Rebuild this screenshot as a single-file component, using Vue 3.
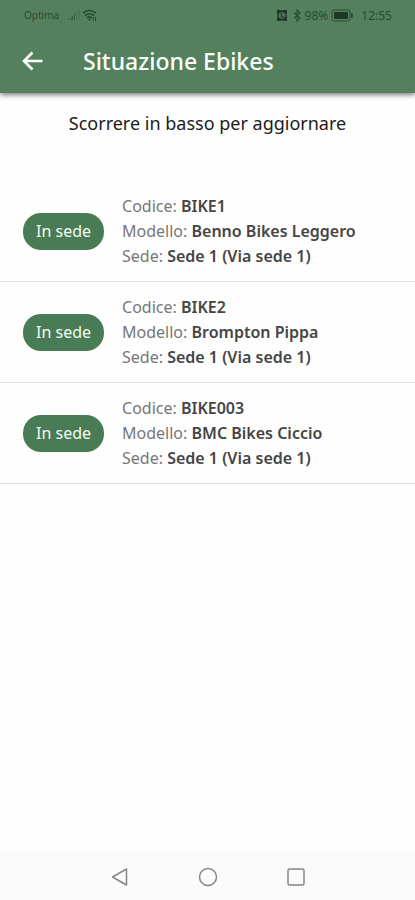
<script setup>
const bikes = [
  { code: 'BIKE1', model: 'Benno Bikes Leggero', site: 'Sede 1 (Via sede 1)', status: 'In sede' },
  { code: 'BIKE2', model: 'Brompton Pippa', site: 'Sede 1 (Via sede 1)', status: 'In sede' },
  { code: 'BIKE003', model: 'BMC Bikes Ciccio', site: 'Sede 1 (Via sede 1)', status: 'In sede' },
]
</script>

<template>
  <div class="screen">
    <header class="header">
      <div class="status">
        <div class="status-group left">
          <span class="carrier">Optima</span>
          <svg width="13" height="12" viewBox="0 0 13 12" aria-hidden="true">
            <path d="M1 11h1V9.500H1zM3 11h3V6.500zM7 11h1V5H7z" fill="#335b3e" />
            <path d="M9.500 11V3M12 11V1" stroke="#47724f" stroke-width="1" />
          </svg>
          <svg width="16" height="13" viewBox="0 0 16 13" fill="none" stroke="#294c34" stroke-width="1.700" aria-hidden="true">
            <path d="M1 4q6.500-5 13 0M3 6.500q4.500-3.500 9 0M5 9q2.500-2 5 0" />
            <path d="M6 10h3l-1.500 2z" fill="#294c34" stroke="none" />
            <path d="M11.500 8v4M13.500 8v4" stroke-width="1" />
          </svg>
        </div>
        <div class="status-group right">
          <svg width="12" height="13" viewBox="0 0 12 13" aria-hidden="true">
            <path d="M1 1h3l2 .500L8 1h3v3l-.500 2 .500 3v3H9l-3-.500L3 12H1V9l.500-3L1 4z" fill="#1d3826" />
            <circle cx="6" cy="6.500" r="3.300" fill="#4b7755" />
            <path d="M5.500 4v3l2 1.500" fill="none" stroke="#1d3826" stroke-width="1.200" />
          </svg>
          <svg class="bluetooth" width="9" height="13" viewBox="0 0 9 13" fill="none" stroke="#294c34" stroke-width="1.200" aria-hidden="true">
            <path d="M1 3.500l6 5.500-3 3V1l3 3-6 5.500" />
          </svg>
          <span>98%</span>
          <svg width="23" height="13" viewBox="0 0 23 13" aria-hidden="true">
            <rect x="1" y="1" width="18" height="11" rx="2.500" fill="none" stroke="#294c34" />
            <rect x="3" y="3" width="14" height="7" rx="1" fill="#1d3826" />
            <path d="M20 4q2 0 2 2.500T20 9z" fill="#294c34" />
          </svg>
          <time class="clock">12:55</time>
        </div>
      </div>
      <div class="toolbar">
        <button class="back" type="button" aria-label="Indietro">
          <svg width="22" height="20" viewBox="0 0 22 20" fill="none" stroke="currentColor" stroke-width="2.600">
            <path d="M20.500 10H2.500M10.500 1.500L2 10l8.500 8.500" />
          </svg>
        </button>
        <h1>Situazione Ebikes</h1>
      </div>
    </header>

    <main>
      <p class="hint">Scorrere in basso per aggiornare</p>
      <ul class="list">
        <li v-for="bike in bikes" :key="bike.code" class="row">
          <span class="badge">{{ bike.status }}</span>
          <div class="details">
            <div>Codice: <strong>{{ bike.code }}</strong></div>
            <div>Modello: <strong>{{ bike.model }}</strong></div>
            <div>Sede: <strong>{{ bike.site }}</strong></div>
          </div>
        </li>
      </ul>
    </main>

    <nav class="system-nav">
      <button type="button" aria-label="Torna indietro">
        <svg width="20" height="20" viewBox="0 0 20 20"><path d="M16.500 2v16L2.500 10z" /></svg>
      </button>
      <button type="button" aria-label="Home">
        <svg width="20" height="20" viewBox="0 0 20 20"><circle cx="10" cy="10" r="8.500" /></svg>
      </button>
      <button type="button" aria-label="App recenti">
        <svg width="20" height="20" viewBox="0 0 20 20"><rect x="2" y="2" width="16" height="16" rx="1.500" /></svg>
      </button>
    </nav>
  </div>
</template>

<style>
body {
  margin: 0;
  background: #fefefe;
}
</style>

<style scoped>
.screen {
  display: flex;
  flex-direction: column;
  min-height: 100vh;
  font-family: "Noto Sans", "Liberation Sans", sans-serif;
}
button {
  display: flex;
  align-items: center;
  justify-content: center;
  padding: 0;
  border: 0;
  background: none;
}
.header {
  background: #54805e;
  box-shadow: 0 2px 5px rgba(0, 0, 0, 0.5);
}
.status {
  display: flex;
  justify-content: space-between;
  align-items: center;
  height: 30px;
  padding: 0 23px 0 24px;
  font-size: 12px;
  color: #294c34;
}
.status-group {
  display: flex;
  align-items: center;
  gap: 2px;
}
.carrier {
  margin-right: 6px;
  font-size: 10px;
}
.right {
  gap: 3px;
}
.bluetooth {
  margin-left: 2px;
}
.clock {
  margin-left: 4px;
}
.toolbar {
  display: flex;
  align-items: center;
  height: 61px;
  padding: 0 22px 2px;
  gap: 39px;
  color: #fbfffb;
}
.back {
  color: inherit;
}
h1 {
  margin: 0;
  font-size: 23px;
  line-height: 30px;
  font-weight: 500;
}
.hint {
  margin: 0;
  padding: 18px 16px 0;
  font-size: 18px;
  line-height: 24px;
  text-align: center;
  color: #1c1c1c;
}
.list {
  margin: 46px 0 0;
  padding: 0;
  list-style: none;
}
.row {
  display: flex;
  align-items: center;
  gap: 18px;
  padding: 13px 23px 12px;
  border-bottom: 1px solid #dedede;
}
.badge {
  flex: none;
  padding: 6px 13px;
  border-radius: 18px;
  font-size: 16px;
  line-height: 25px;
  color: #f4faf4;
  background: #497c55;
}
.details {
  font-size: 16px;
  line-height: 25px;
  color: #777;
}
strong {
  font-weight: 600;
  color: #454545;
}
.system-nav {
  display: flex;
  justify-content: center;
  gap: 68px;
  height: 47px;
  margin-top: auto;
  background: #fbfbfb;
}
.system-nav svg {
  fill: none;
  stroke: #858585;
  stroke-width: 1.500;
  stroke-linejoin: round;
}
</style>
